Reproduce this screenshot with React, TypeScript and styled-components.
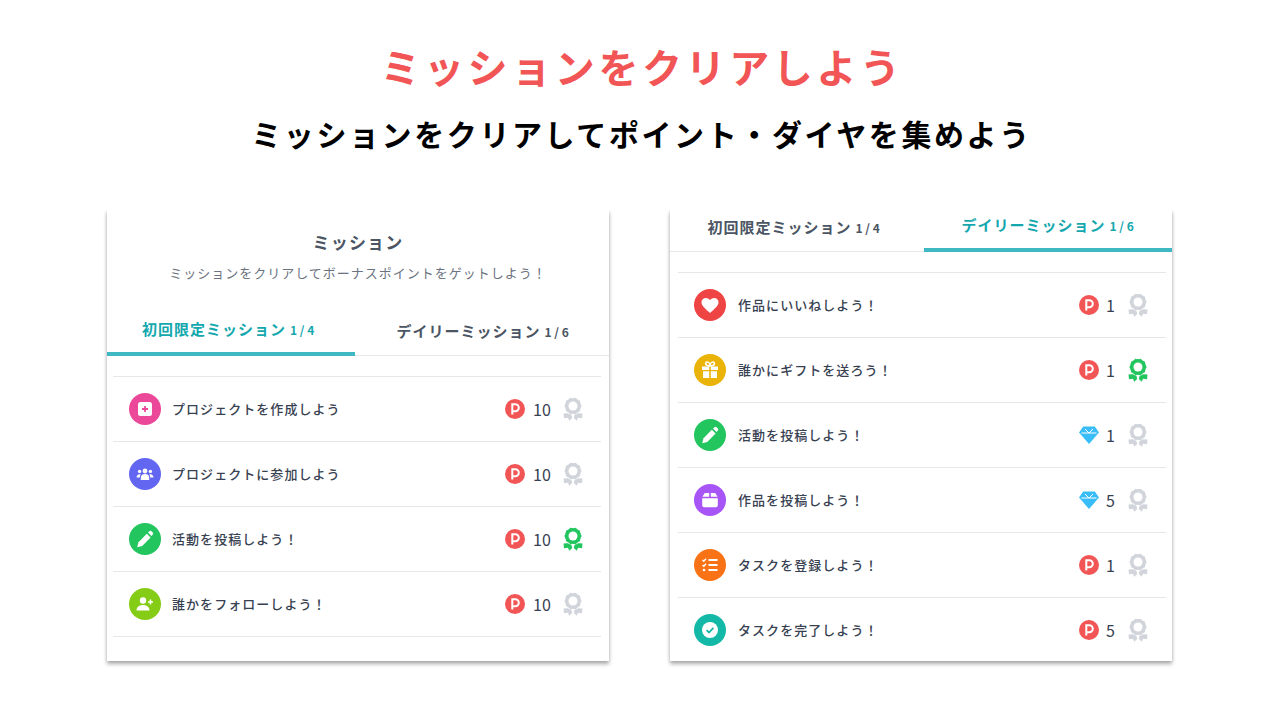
import { FC, ReactNode } from "react";
import styled, { createGlobalStyle } from "styled-components";

const GlobalStyle = createGlobalStyle`
  html, body {
    margin: 0;
    padding: 0;
    background: #fff;
    font-family: "Noto Sans CJK JP", "Noto Sans", sans-serif;
  }
`;

const PointIcon: FC = () => (
  <svg width="20" height="20" viewBox="0 0 20 20">
    <circle cx="10" cy="10" r="10" fill="#f25555" />
    <path d="M7.300 15.500V5.300h3a3.500 3.500 0 0 1 0 7H7.300" fill="none" stroke="#fff" strokeWidth="2" />
  </svg>
);

const DiamondIcon: FC = () => (
  <svg width="20" height="20" viewBox="0 0 20 20">
    <path d="M4.200 1.500h11.600L20 7.500 10 19 0 7.500z" fill="#38bdf8" />
    <path d="M2.500 8h15M6 4l4 4 4-4" fill="none" stroke="#fff" strokeWidth="1" />
  </svg>
);

const MedalIcon: FC<{ done?: boolean }> = ({ done }) => {
  const color = done ? "#22c55e" : "#d1d5db";
  const bumps = Array.from({ length: 10 }, (_, i) => (i * Math.PI) / 5);
  return (
    <svg width="20" height="24" viewBox="0 0 20 24">
      <path d="M.5 16.500l7.500-.5 1.200 5-3 2.700-1.200-2.900-4 .4zM19.500 16.500l-7.500-.5-1.200 5 3 2.700 1.200-2.900 4 .4z" fill={color} />
      <circle cx="10" cy="9" r="9" fill="#fff" />
      <circle cx="10" cy="9" r="8.100" fill={color} />
      {bumps.map((a) => (
        <circle key={a} cx={10 + 7.600 * Math.cos(a)} cy={9 + 7.600 * Math.sin(a)} r="1" fill={color} />
      ))}
      <circle cx="10" cy="9" r="4.500" fill="#fff" />
    </svg>
  );
};

const glyphs: Record<string, ReactNode> = {
  plus: (
    <>
      <rect x="3" y="3" width="14" height="14" rx="2.500" fill="#fff" />
      <path d="M10 7v6M7 10h6" stroke="#ec4899" strokeWidth="1.800" />
    </>
  ),
  users: (
    <>
      <circle cx="10" cy="7" r="2.400" fill="#fff" />
      <circle cx="4.600" cy="7.400" r="1.700" fill="#fff" />
      <circle cx="15.400" cy="7.400" r="1.700" fill="#fff" />
      <path d="M5.800 16v-2.200a4.200 3.800 0 0 1 8.400 0V16z" fill="#fff" />
      <path d="M1.500 13.500c0-2 1.300-3.300 3-3.300.500 0 .9.100 1.200.3-.6.800-.9 1.700-.9 2.800v.2zM18.500 13.500c0-2-1.300-3.300-3-3.300-.5 0-.9.100-1.200.3.600.8.900 1.700.9 2.800v.2z" fill="#fff" />
    </>
  ),
  pencil: (
    <>
      <path d="M11.800 4.700l3.800 3.800L7.200 17l-5 1.300 1.300-5z" fill="#fff" />
      <path d="M13 3.500l1.400-1.300a1.600 1.600 0 0 1 2.200 0l1.200 1.200a1.600 1.600 0 0 1 0 2.200L16.500 7z" fill="#fff" />
    </>
  ),
  userPlus: (
    <>
      <circle cx="8" cy="6.500" r="3.200" fill="#fff" />
      <path d="M1.500 16.500c0-3.400 2.800-5.500 6.500-5.500s6.500 2.100 6.500 5.500z" fill="#fff" />
      <path d="M15.500 5.500v5M13 8h5" stroke="#fff" strokeWidth="1.500" />
    </>
  ),
  heart: (
    <path d="M10 18l-1.300-1.200C4.200 12.700 1.500 10.300 1.500 7.200 1.500 4.800 3.400 3 5.800 3c1.600 0 3.200.8 4.200 2.100C11 3.800 12.600 3 14.200 3c2.400 0 4.300 1.800 4.300 4.200 0 3.100-2.700 5.500-7.200 9.600z" fill="#fff" />
  ),
  gift: (
    <>
      <path d="M2 6.500h7.200V10H2zM10.800 6.500H18V10h-7.200zM3 11.200h6.200V18H3zM10.800 11.200H17V18h-6.200z" fill="#fff" />
      <path d="M10 6C8 6 5.600 5.300 5.600 3.600 5.600 2.600 6.400 2 7.200 2 8.800 2 10 4 10 6zm0 0c2 0 4.400-.7 4.400-2.400 0-1-.8-1.600-1.600-1.600C11.200 2 10 4 10 6z" fill="none" stroke="#fff" strokeWidth="1.600" />
    </>
  ),
  box: (
    <>
      <path d="M4.800 3h4.400v3.800H2.400zM10.800 3h4.400l2.400 3.800h-6.800z" fill="#fff" />
      <path d="M2.200 8.200h15.600v7a2 2 0 0 1-2 2H4.200a2 2 0 0 1-2-2z" fill="#fff" />
    </>
  ),
  tasks: (
    <>
      <path d="M8.500 5h9M8.500 10h9M8.500 15h9" stroke="#fff" strokeWidth="1.800" />
      <path d="M2.500 5l1.300 1.300L6 3.800M2.500 10l1.300 1.300L6 8.800" fill="none" stroke="#fff" strokeWidth="1.300" />
      <circle cx="4" cy="15" r="1.300" fill="#fff" />
    </>
  ),
  check: (
    <>
      <circle cx="10" cy="10" r="8" fill="#fff" />
      <path d="M6.600 10.200l2.400 2.300 4.400-4.600" fill="none" stroke="#14b8a6" strokeWidth="1.800" />
    </>
  ),
};

type Mission = {
  label: string;
  icon: string;
  tint: string;
  reward: "point" | "diamond";
  amount: number;
  done?: boolean;
};

const firstMissions: Mission[] = [
  { label: "プロジェクトを作成しよう", icon: "plus", tint: "#ec4899", reward: "point", amount: 10 },
  { label: "プロジェクトに参加しよう", icon: "users", tint: "#6366f1", reward: "point", amount: 10 },
  { label: "活動を投稿しよう！", icon: "pencil", tint: "#22c55e", reward: "point", amount: 10, done: true },
  { label: "誰かをフォローしよう！", icon: "userPlus", tint: "#84cc16", reward: "point", amount: 10 },
];

const dailyMissions: Mission[] = [
  { label: "作品にいいねしよう！", icon: "heart", tint: "#ef4444", reward: "point", amount: 1 },
  { label: "誰かにギフトを送ろう！", icon: "gift", tint: "#eab308", reward: "point", amount: 1, done: true },
  { label: "活動を投稿しよう！", icon: "pencil", tint: "#22c55e", reward: "diamond", amount: 1 },
  { label: "作品を投稿しよう！", icon: "box", tint: "#a855f7", reward: "diamond", amount: 5 },
  { label: "タスクを登録しよう！", icon: "tasks", tint: "#f97316", reward: "point", amount: 1 },
  { label: "タスクを完了しよう！", icon: "check", tint: "#14b8a6", reward: "point", amount: 5 },
];

const MissionList: FC<{ items: Mission[]; daily?: boolean }> = ({ items, daily }) => (
  <List $daily={daily}>
    {items.map((m) => (
      <Row key={m.label + m.amount}>
        <IconCircle $tint={m.tint}>
          <svg width="20" height="20" viewBox="0 0 20 20">
            {glyphs[m.icon]}
          </svg>
        </IconCircle>
        <RowLabel $daily={daily}>{m.label}</RowLabel>
        <RewardIcon>{m.reward === "point" ? <PointIcon /> : <DiamondIcon />}</RewardIcon>
        <Amount $wide={m.amount >= 10}>{m.amount}</Amount>
        <MedalIcon done={m.done} />
      </Row>
    ))}
  </List>
);

const Tabs: FC<{ active: 0 | 1 }> = ({ active }) => (
  <TabBar>
    <Tab $active={active === 0}>
      初回限定ミッション<TabCount>1/4</TabCount>
    </Tab>
    <Tab $active={active === 1}>
      デイリーミッション<TabCount>1/6</TabCount>
    </Tab>
  </TabBar>
);

const App: FC = () => (
  <Page>
    <GlobalStyle />
    <Title>ミッションをクリアしよう</Title>
    <Subtitle>ミッションをクリアしてポイント・ダイヤを集めよう</Subtitle>
    <Cards>
      <Card>
        <CardHead>
          <CardTitle>ミッション</CardTitle>
          <CardText>ミッションをクリアしてボーナスポイントをゲットしよう！</CardText>
        </CardHead>
        <Tabs active={0} />
        <MissionList items={firstMissions} />
      </Card>
      <Card>
        <Tabs active={1} />
        <MissionList items={dailyMissions} daily />
      </Card>
    </Cards>
  </Page>
);

export default App;

const Page = styled.div`
  width: 1280px;
  height: 720px;
  box-sizing: border-box;
  padding-top: 38px;
  overflow: hidden;
  background: #fff;
`;

const Title = styled.h1`
  margin: 0;
  padding-left: 4px;
  height: 56px;
  line-height: 56px;
  text-align: center;
  font-size: 40px;
  font-weight: 700;
  letter-spacing: 3.6px;
  color: #f25555;
`;

const Subtitle = styled.h2`
  margin: 15px 0 0;
  padding-left: 3px;
  height: 48px;
  line-height: 48px;
  text-align: center;
  font-size: 30px;
  font-weight: 700;
  letter-spacing: 2.6px;
  color: #000;
`;

const Cards = styled.div`
  display: flex;
  gap: 61px;
  margin: 53px 0 0 107px;
`;

const Card = styled.section`
  width: 502px;
  height: 451px;
  box-sizing: border-box;
  background: #fff;
  overflow: hidden;
  box-shadow: 0 3px 4px rgba(0, 0, 0, 0.32), 0 0 3px rgba(0, 0, 0, 0.1);
  clip-path: inset(0 -8px -8px -8px);
`;

const CardHead = styled.header`
  box-sizing: border-box;
  padding-top: 19px;
  height: 104px;
  text-align: center;
`;

const CardTitle = styled.div`
  height: 26px;
  line-height: 26px;
  font-size: 17px;
  font-weight: 700;
  letter-spacing: 1.2px;
  color: #4b5563;
`;

const CardText = styled.div`
  margin-top: 5px;
  height: 26px;
  line-height: 26px;
  font-size: 13px;
  letter-spacing: 1px;
  color: #6b7280;
`;

const TabBar = styled.div`
  display: flex;
  border-bottom: 1px solid #e5e7eb;
`;

const Tab = styled.div<{ $active: boolean }>`
  box-sizing: border-box;
  flex: 0 0 auto;
  width: ${(p) => (p.$active ? "248px" : "254px")};
  height: 42px;
  margin-bottom: -1px;
  padding-top: ${(p) => (p.$active ? "3px" : "5px")};
  line-height: 24px;
  text-align: center;
  font-size: 15px;
  font-weight: 700;
  letter-spacing: 1px;
  color: ${(p) => (p.$active ? "#14a8ae" : "#4b5563")};
  border-bottom: ${(p) => (p.$active ? "4px solid #3fb8c4" : "none")};
  &:first-child {
    padding-right: ${(p) => (p.$active ? "3px" : "4px")};
  }
  &:last-child {
    padding-left: ${(p) => (p.$active ? "2px" : "4px")};
  }
`;

const TabCount = styled.span`
  margin-left: 4px;
  font-size: 12px;
  letter-spacing: 2.700px;
`;

const List = styled.ul<{ $daily?: boolean }>`
  list-style: none;
  margin: 20px ${(p) => (p.$daily ? "6px 0 8px" : "8px 0 6px")};
  padding: 0;
  border-top: 1px solid #e5e7eb;
`;

const Row = styled.li`
  display: flex;
  align-items: center;
  height: 64px;
  padding: 0 18px 0 16px;
  border-bottom: 1px solid #e5e7eb;
`;

const IconCircle = styled.span<{ $tint: string }>`
  display: flex;
  align-items: center;
  justify-content: center;
  width: 32px;
  height: 32px;
  border-radius: 50%;
  background: ${(p) => p.$tint};
`;

const RowLabel = styled.span<{ $daily?: boolean }>`
  flex: 1;
  margin: -2px 0 0 ${(p) => (p.$daily ? "12px" : "11px")};
  font-size: 13px;
  font-weight: 500;
  letter-spacing: 1.050px;
  color: #374151;
`;

const RewardIcon = styled.span`
  display: flex;
`;

const Amount = styled.span<{ $wide: boolean }>`
  box-sizing: border-box;
  width: ${(p) => (p.$wide ? "38px" : "29px")};
  padding-left: ${(p) => (p.$wide ? "8px" : "7px")};
  font-family: "Noto Sans CJK JP", sans-serif;
  font-size: 16px;
  color: #374151;
`;
